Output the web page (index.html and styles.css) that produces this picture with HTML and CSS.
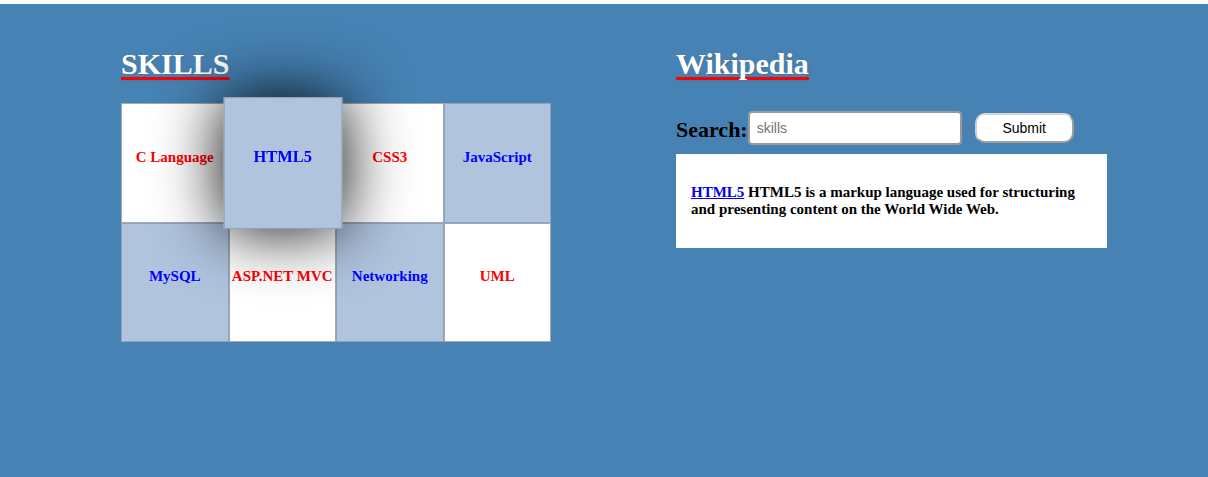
FILE: index.html
```html
<!DOCTYPE html>
<html>
<head>
<meta charset="utf-8">
<title>Skills</title>
<link rel="stylesheet" href="styles.css">
</head>
<body>
<div class="main">
  <section class="skills">
    <h1 class="title">SKILLS</h1>
    <div class="grid">
      <div class="cell light red">C Language</div>
      <div class="cell blue-bg blue active">HTML5</div>
      <div class="cell light red">CSS3</div>
      <div class="cell blue-bg blue">JavaScript</div>
      <div class="cell blue-bg blue">MySQL</div>
      <div class="cell light red">ASP.NET MVC</div>
      <div class="cell blue-bg blue">Networking</div>
      <div class="cell light red">UML</div>
    </div>
  </section>
  <section class="wiki">
    <h1 class="title">Wikipedia</h1>
    <form class="search">
      <label class="search-label" for="q">Search:</label>
      <input class="search-input" id="q" type="text" placeholder="skills">
      <button class="search-btn" type="button">Submit</button>
    </form>
    <div class="result">
      <p class="result-text"><a href="#" class="result-link">HTML5</a> HTML5 is a markup language used for structuring and presenting content on the World Wide Web.</p>
    </div>
  </section>
</div>
</body>
</html>
```

FILE: styles.css
```css
html, body {
  margin: 0;
  padding: 0;
  background: #ffffff;
}

body {
  padding-top: 4px;
  font-family: "Liberation Serif", "Times New Roman", serif;
}

.main {
  background: #4682b4;
  min-height: 473px;
  box-sizing: border-box;
  display: flex;
  gap: 125px;
  padding: 43px 0 0 121px;
}

.title {
  margin: 0;
  font-size: 30px;
  line-height: 34px;
  font-weight: bold;
  color: #ffffff;
  text-decoration: underline;
  text-decoration-color: #ff0000;
  text-decoration-thickness: 3px;
  text-underline-offset: 3px;
  text-decoration-skip-ink: none;
  text-shadow: 1px 1px 2px rgba(90, 110, 130, 0.6);
  display: inline-block;
}

.skills {
  width: 430px;
}

.grid {
  margin-top: 22px;
  display: grid;
  grid-template-columns: repeat(4, 107.5px);
  grid-template-rows: repeat(2, 119.5px);
}

.cell {
  box-sizing: border-box;
  border: 1px solid #a3a9b0;
  display: flex;
  align-items: center;
  justify-content: center;
  padding-bottom: 11px;
  font-size: 15px;
  font-weight: bold;
  white-space: nowrap;
}

.light {
  background: #ffffff;
}

.blue-bg {
  background: #b0c4de;
  border-color: #8fa2bb;
}

.red {
  color: #ff0000;
}

.blue {
  color: #0000ff;
}

.active {
  position: relative;
  z-index: 2;
  transform: scale(1.1);
  box-shadow: 0 0 60px rgba(0, 0, 0, 1);
}

.wiki {
  width: 431px;
}

.search {
  margin: 30px 0 0 0;
  display: flex;
  align-items: center;
  height: 34px;
}

.search-label {
  font-size: 22px;
  font-weight: bold;
  color: #000000;
  padding-top: 3px;
}

.search-input {
  box-sizing: border-box;
  width: 214px;
  height: 34px;
  margin: 0;
  border: 2px solid #9a9a9a;
  border-radius: 4px;
  padding: 0 7px;
  font-family: "Liberation Sans", Arial, sans-serif;
  font-size: 14px;
  background: #ffffff;
}

.search-input::placeholder {
  color: #757575;
}

.search-btn {
  box-sizing: border-box;
  margin-left: 13px;
  width: 99px;
  height: 30px;
  border: 2px solid #a0a0a0;
  border-top-color: #d8d8d8;
  border-left-color: #d0d0d0;
  border-radius: 10px;
  background: #ffffff;
  font-family: "Liberation Sans", Arial, sans-serif;
  font-size: 14px;
  color: #000000;
  padding: 0;
}

.result {
  margin-top: 9px;
  background: #ffffff;
  height: 94px;
  box-sizing: border-box;
  padding: 30px 15px 0 15px;
}

.result-text {
  margin: 0;
  font-size: 15px;
  line-height: 17px;
  font-weight: bold;
  color: #000000;
}

.result-link {
  color: #0000ee;
  text-decoration: underline;
}
```
